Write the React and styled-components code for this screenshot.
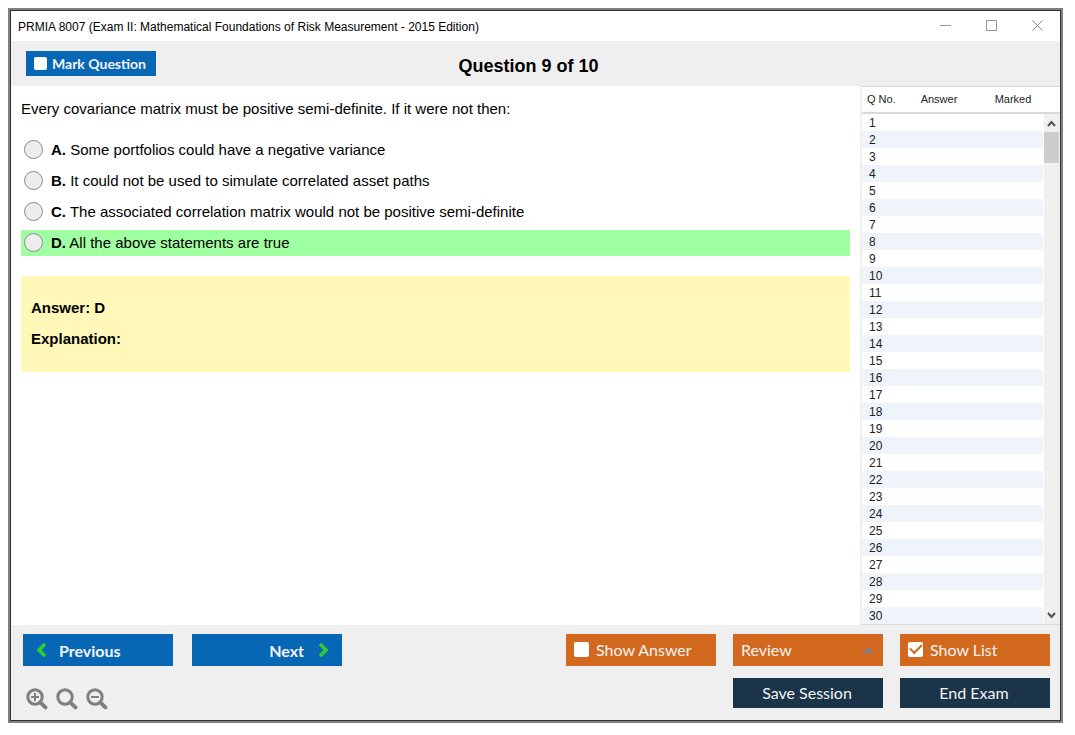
import React, { useState } from 'react';
import styled, { createGlobalStyle } from 'styled-components';

const GlobalStyle = createGlobalStyle`
  * {
    box-sizing: border-box;
  }
  body {
    margin: 0;
    background: white;
    color: black;
    font-family: "Liberation Sans", Arial, sans-serif;
    font-size: 15px;
  }
`;

const Page = styled.div`
  display: flex;
  min-height: 100vh;
  padding: 10px 14px 14px 10px;
`;

const Window = styled.div`
  flex: 1;
  display: flex;
  flex-direction: column;
  min-width: 0;
  border: 1px solid #333;
  box-shadow: 0 0 0 2px #808080;
`;

const TitleBar = styled.div`
  display: flex;
  align-items: flex-start;
  height: 30px;
  padding-left: 7px;
  font-size: 12px;
`;

const TitleText = styled.span`
  flex: 1;
  line-height: 32px;
`;

const TitleButton = styled.button`
  display: flex;
  align-items: center;
  justify-content: center;
  width: 46px;
  height: 28px;
  padding: 0;
  border: none;
  background: none;
`;

const Toolbar = styled.div`
  display: grid;
  grid-template-columns: 1fr auto 1fr;
  align-items: center;
  height: 45px;
  padding: 0 29px 0 15px;
  background: #efefef;
`;

const Heading = styled.h1`
  margin: 0;
  padding-top: 4px;
  font-size: 18px;
  line-height: 20px;
`;

const CheckLabel = styled.label`
  display: flex;
  align-items: center;
  gap: ${(props) => (props.$small ? 5 : 7)}px;
  width: ${(props) => (props.$small ? 130 : 150)}px;
  height: ${(props) => (props.$small ? 25 : 32)}px;
  padding: ${(props) => (props.$small ? '0 8px' : '0 8px 2px')};
  background: ${(props) => (props.$small ? '#0767b5' : '#d2691e')};
  color: #f3f3f3;
  font-family: Lato, "Open Sans", sans-serif;
  font-size: ${(props) => (props.$small ? 14 : 16)}px;
  font-weight: ${(props) => (props.$small ? 700 : 400)};
  white-space: nowrap;
`;

const CheckBox = styled.input`
  appearance: none;
  display: grid;
  place-content: center;
  flex: none;
  width: ${(props) => (props.$small ? 13 : 15)}px;
  height: ${(props) => (props.$small ? 13 : 15)}px;
  margin: 0;
  border-radius: 2px;
  background: white;

  &:checked::after {
    content: "";
    width: 10px;
    height: 5px;
    margin-bottom: 3px;
    border: solid #d2691e;
    border-width: 0 0 2px 2px;
    transform: rotate(-45deg);
  }
`;

const Main = styled.div`
  flex: 1;
  display: flex;
`;

const QuestionPane = styled.div`
  flex: 1;
  padding: 12px 10px;
`;

const QuestionText = styled.p`
  margin: 0 0 17px;
  line-height: 22px;
`;

const Options = styled.div`
  display: flex;
  flex-direction: column;
  gap: 5px;
`;

const Option = styled.label`
  display: flex;
  align-items: center;
  gap: 8px;
  height: 26px;
  padding: 0 0 2px 3px;
  background: ${(props) => (props.$correct ? '#a0ffa0' : 'transparent')};
`;

const Radio = styled.input`
  appearance: none;
  flex: none;
  width: 19px;
  height: 19px;
  margin: 0;
  border: 1px solid #8a8a8a;
  border-radius: 50%;
  background: #ededed;

  &:checked {
    box-shadow: inset 0 0 0 4px #ededed;
    background: #333;
  }
`;

const AnswerBox = styled.div`
  display: flex;
  flex-direction: column;
  gap: 8px;
  margin-top: 20px;
  padding: 20px 10px 22px;
  background: #fff8b9;
  font-weight: bold;
  line-height: 23px;
`;

const ListPane = styled.div`
  position: relative;
  width: 200px;
  border-left: 2px solid #efefef;
  border-bottom: 1px solid #d9d9d9;
`;

const ListTable = styled.table`
  width: 100%;
  table-layout: fixed;
  border-collapse: separate;
  border-spacing: 0;
  color: #222;
`;

const Th = styled.th`
  width: ${(props) => props.$width}px;
  height: 28px;
  padding: ${(props) => props.$pad || '0 0 2px'};
  border-top: 1px solid #d9d9d9;
  border-bottom: 2px solid #d9d9d9;
  font-size: 11px;
  font-weight: normal;
  text-align: ${(props) => props.$align || 'center'};
  white-space: nowrap;
`;

const Row = styled.tr`
  background: ${(props) => (props.$even ? '#eef4f9' : 'white')};
`;

const Td = styled.td`
  height: 17px;
  padding: 2px 0 0 7px;
  font-size: 12px;
  line-height: 15px;
`;

// sits over the right edge of the rows, below the header
const ScrollBar = styled.div`
  position: absolute;
  top: 28px;
  right: 0;
  bottom: 0;
  display: flex;
  flex-direction: column;
  width: 17px;
  padding-right: 1px;
  border-left: 1px solid white;
  background: #f0f0f0;
`;

const ScrollButton = styled.button`
  display: flex;
  align-items: center;
  justify-content: center;
  height: 18px;
  padding: 0;
  border: none;
  background: none;
`;

const Track = styled.div`
  flex: 1;
`;

const Thumb = styled.div`
  height: 31px;
  background: #cdcdcd;
`;

const Footer = styled.div`
  display: flex;
  justify-content: space-between;
  padding: 9px 10px 10px 12px;
  background: #efefef;
`;

const FooterLeft = styled.div`
  display: flex;
  flex-direction: column;
  gap: 22px;
`;

const NavRow = styled.div`
  display: flex;
  gap: 19px;
`;

const ZoomRow = styled.div`
  display: flex;
  gap: 8px;
  padding-left: 3px;
`;

const FooterRight = styled.div`
  display: grid;
  grid-template-columns: repeat(3, 150px);
  column-gap: 17px;
  row-gap: 12px;
  align-content: start;
`;

const NavButton = styled.button`
  display: flex;
  align-items: center;
  justify-content: ${(props) => (props.$right ? 'flex-end' : 'flex-start')};
  gap: ${(props) => (props.$right ? 14 : 12)}px;
  width: 150px;
  height: 32px;
  padding: 0 13px;
  border: none;
  background: #0767b5;
  color: #f3f3f3;
  font-family: Lato, "Open Sans", sans-serif;
  font-size: 16px;
  font-weight: 700;
`;

const IconButton = styled.button`
  display: flex;
  padding: 0;
  border: none;
  background: none;
`;

const DarkButton = styled.button`
  height: 30px;
  padding: 0 2px 2px 0;
  border: none;
  background: #1b344a;
  color: #f3f3f3;
  font-family: Lato, "Open Sans", sans-serif;
  font-size: 16px;

  &:first-of-type {
    grid-column: 2;
  }
`;

const SelectWrap = styled.div`
  position: relative;
`;

const Select = styled.select`
  appearance: none;
  width: 100%;
  height: 32px;
  padding: 0 8px 2px;
  border: none;
  border-radius: 0;
  background: #d2691e;
  color: #f3f3f3;
  font-family: Lato, "Open Sans", sans-serif;
  font-size: 16px;
`;

const Caret = styled.svg`
  position: absolute;
  top: 13px;
  right: 9px;
  pointer-events: none;
`;

const options = [
  { letter: 'A', text: 'Some portfolios could have a negative variance' },
  { letter: 'B', text: 'It could not be used to simulate correlated asset paths' },
  { letter: 'C', text: 'The associated correlation matrix would not be positive semi-definite' },
  { letter: 'D', text: 'All the above statements are true', correct: true },
];

const rows = Array.from({ length: 30 }, (_, i) => i + 1);

const Chevron = ({ points }) => (
  <svg width="11" height="16" viewBox="0 0 11 16" fill="none" stroke="#32cd32" strokeWidth="3.6">
    <polyline points={points} />
  </svg>
);

const ZoomIcon = ({ sign }) => (
  <svg width="22" height="22" viewBox="0 0 22 22" fill="none" stroke="#808080">
    <circle cx="9" cy="9" r="7.2" strokeWidth="3" />
    <path d="M14.3 14.3L19.4 19.4" strokeWidth="4" strokeLinecap="round" />
    {sign && <path d={sign} strokeWidth="2" />}
  </svg>
);

const ScrollArrow = ({ points }) => (
  <svg width="9" height="7" viewBox="0 0 9 7" fill="none" stroke="#505050" strokeWidth="2">
    <polyline points={points} />
  </svg>
);

const App = () => {
  const [marked, setMarked] = useState(false);
  const [showAnswer, setShowAnswer] = useState(false);
  const [showList, setShowList] = useState(true);

  return (
    <Page>
      <GlobalStyle />
      <Window>
        <TitleBar>
          <TitleText>PRMIA 8007 (Exam II: Mathematical Foundations of Risk Measurement - 2015 Edition)</TitleText>
          <TitleButton aria-label="Minimize">
            <svg width="11" height="11" stroke="#999"><path d="M0 5.5H11" /></svg>
          </TitleButton>
          <TitleButton aria-label="Maximize">
            <svg width="11" height="11" stroke="#999" fill="none"><rect x="0.5" y="0.5" width="10" height="10" /></svg>
          </TitleButton>
          <TitleButton aria-label="Close">
            <svg width="11" height="11" stroke="#888"><path d="M0.5 0.5L10.5 10.5M10.5 0.5L0.5 10.5" /></svg>
          </TitleButton>
        </TitleBar>

        <Toolbar>
          <CheckLabel $small>
            <CheckBox $small type="checkbox" checked={marked} onChange={() => setMarked(!marked)} />
            Mark Question
          </CheckLabel>
          <Heading>Question 9 of 10</Heading>
        </Toolbar>

        <Main>
          <QuestionPane>
            <QuestionText>
              Every covariance matrix must be positive semi-definite. If it were not then:
            </QuestionText>
            <Options>
              {options.map((option) => (
                <Option key={option.letter} $correct={option.correct}>
                  <Radio type="radio" name="answer" value={option.letter} />
                  <span><strong>{option.letter}.</strong> {option.text}</span>
                </Option>
              ))}
            </Options>
            <AnswerBox>
              <div>Answer: D</div>
              <div>Explanation:</div>
            </AnswerBox>
          </QuestionPane>

          {showList && (
            <ListPane>
              <ListTable>
                <thead>
                  <tr>
                    <Th $width={40} $align="left" $pad="0 0 2px 5px">Q No.</Th>
                    <Th $width={74}>Answer</Th>
                    <Th $width={84} $pad="0 10px 2px 0">Marked</Th>
                  </tr>
                </thead>
                <tbody>
                  {rows.map((n) => (
                    <Row key={n} $even={n % 2 === 0}>
                      <Td>{n}</Td>
                      <Td />
                      <Td />
                    </Row>
                  ))}
                </tbody>
              </ListTable>
              <ScrollBar>
                <ScrollButton aria-label="Scroll up"><ScrollArrow points="1,6 4.5,2 8,6" /></ScrollButton>
                <Track><Thumb /></Track>
                <ScrollButton aria-label="Scroll down"><ScrollArrow points="1,1 4.5,5 8,1" /></ScrollButton>
              </ScrollBar>
            </ListPane>
          )}
        </Main>

        <Footer>
          <FooterLeft>
            <NavRow>
              <NavButton><Chevron points="9,2 3,8 9,14" />Previous</NavButton>
              <NavButton $right>Next<Chevron points="2,2 8,8 2,14" /></NavButton>
            </NavRow>
            <ZoomRow>
              <IconButton aria-label="Zoom in"><ZoomIcon sign="M5 9H13M9 5V13" /></IconButton>
              <IconButton aria-label="Reset zoom"><ZoomIcon /></IconButton>
              <IconButton aria-label="Zoom out"><ZoomIcon sign="M5 9H13" /></IconButton>
            </ZoomRow>
          </FooterLeft>
          <FooterRight>
            <CheckLabel>
              <CheckBox type="checkbox" checked={showAnswer} onChange={() => setShowAnswer(!showAnswer)} />
              Show Answer
            </CheckLabel>
            <SelectWrap>
              <Select aria-label="Review">
                <option>Review</option>
              </Select>
              <Caret width="12" height="6" fill="#808080"><polygon points="0,6 6,0 12,6" /></Caret>
            </SelectWrap>
            <CheckLabel>
              <CheckBox type="checkbox" checked={showList} onChange={() => setShowList(!showList)} />
              Show List
            </CheckLabel>
            <DarkButton>Save Session</DarkButton>
            <DarkButton>End Exam</DarkButton>
          </FooterRight>
        </Footer>
      </Window>
    </Page>
  );
};

export default App;
